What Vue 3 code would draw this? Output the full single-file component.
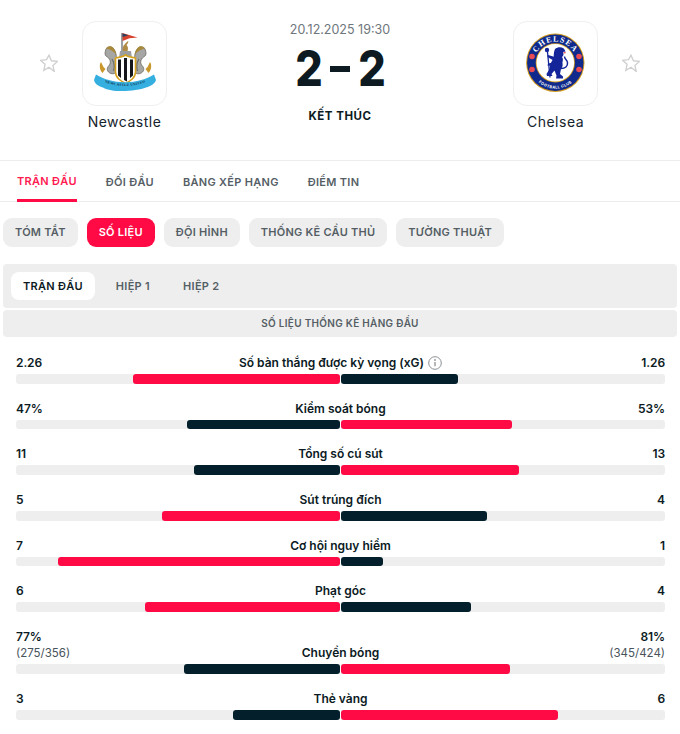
<script setup>
const tabs = ['Trận đấu', 'Đối đầu', 'Bảng xếp hạng', 'Điểm tin']
const pills = ['Tóm tắt', 'Số liệu', 'Đội hình', 'Thống kê cầu thủ', 'Tường thuật']
const periods = ['Trận đấu', 'Hiệp 1', 'Hiệp 2']
const stats = [
  { label: 'Số bàn thắng được kỳ vọng (xG)', l: '2.26', r: '1.26', lw: 207, rw: 117, win: 'l', info: true },
  { label: 'Kiểm soát bóng', l: '47%', r: '53%', lw: 153, rw: 171, win: 'r' },
  { label: 'Tổng số cú sút', l: '11', r: '13', lw: 146, rw: 178, win: 'r' },
  { label: 'Sút trúng đích', l: '5', r: '4', lw: 178, rw: 146, win: 'l' },
  { label: 'Cơ hội nguy hiểm', l: '7', r: '1', lw: 282, rw: 42, win: 'l' },
  { label: 'Phạt góc', l: '6', r: '4', lw: 195, rw: 130, win: 'l' },
  { label: 'Chuyền bóng', l: '77%', r: '81%', ls: '(275/356)', rs: '(345/424)', lw: 156, rw: 169, win: 'r' },
  { label: 'Thẻ vàng', l: '3', r: '6', lw: 107, rw: 217, win: 'r' }
]
const star = 'M9 1.6l2.2 4.9 5.3.6-4 3.6 1.1 5.3L9 12.3l-4.6 2.7 1.1-5.3-4-3.6 5.3-.6z'
</script>

<template>
  <div class="page">
    <header class="match">
      <svg class="star" viewBox="1 1 16 15"><path :d="star" /></svg>
      <div class="team">
        <div class="crest">
          <svg viewBox="0 0 85 85" width="85" height="85">
            <defs>
              <path id="ribbon-arc" d="M18 59c14 8 36 8 50 0" />
              <g id="seahorse">
                <path d="M19 41c-2 3-1.500 8 1.500 11l3-4-2-2c-1-2-1.500-3-2.500-5z" fill="#c9982c" />
                <path d="M24 28c1.500-2.500 5.500-3 7.500-.5 2.500 3 3 7 3 11v13c-3 2-6 1.500-8-.5s-1.500-4.500.5-6.500c2-2.500 1.500-5.500-.5-7.500-1.500-1.500-3.500-2-3.500-4.500 0-1.500.5-3 1-4.500z" fill="#a6a6a4" stroke="#5f5c52" stroke-width=".7" />
                <path d="M24 27.500c1.500-2.500 5.500-3 7.500-.5 1.500 2 2.500 4.500 2.800 7-2-3-5.300-5.500-10.300-6.500z" fill="#a98a3c" />
                <path d="M30 38c2 3 3 7 1.500 12" fill="none" stroke="#6f6f6f" stroke-width="1.300" />
              </g>
            </defs>
            <path d="M40 12v24" stroke="#85898c" stroke-width="1.600" />
            <path d="M40.500 12l15 4.500-8 .8-7 2.700z" fill="#d8432f" />
            <path d="M40.500 12.500l6 1.800-6 1.800z" fill="#27425f" />
            <path d="M41 30c-1-2 0-5 1.500-6.500 1-1.500 2.500-3 4-3.500-.5 2-1 3-2 4 1.500 1.500 2 3.500 1 6z" fill="#b08b45" />
            <path d="M38 30h11l1 7H37z" fill="#9e9e9e" />
            <use href="#seahorse" />
            <use href="#seahorse" transform="translate(87 0) scale(-1 1)" />
            <path d="M33.500 37c3.500-.5 7-1 10-3 3 2 6.500 2.500 10 3v14c0 6-5.500 9-10 11.500-4.500-2.500-10-5.500-10-11.500z" fill="#fff" stroke="#d5a21f" stroke-width="1.600" />
            <path d="M36 38.500h3v18.500l-3-2.500zM42 37h3v23.500l-3-1.500zM48 38.500h3v16l-3 2.500z" fill="#14161a" />
            <path d="M14 53.500c5 3 9 4.500 13 5.500 10 3 22 3 32 0 4-1 8-2.500 13-5.500l2 5.500c-1.500 4-5 6-10 7.500-9 3.500-33 6-43 0-5-1.500-8-3.500-9-7.500z" fill="#35aee0" />
            <text class="ribbon"><textPath href="#ribbon-arc" startOffset="50%" text-anchor="middle">NEWCASTLE UNITED</textPath></text>
          </svg>
        </div>
        <div class="name">Newcastle</div>
      </div>
      <div class="center">
        <div class="date">20.12.2025 19:30</div>
        <div class="score"><span>2</span><i class="dash"></i><span>2</span></div>
        <div class="status">KẾT THÚC</div>
      </div>
      <div class="team">
        <div class="crest">
          <svg viewBox="0 0 85 85" width="85" height="85">
            <defs>
              <path id="top-arc" d="M21 41.800a21 21 0 0 1 42.600 0" />
              <path id="bot-arc" d="M16.500 41.800a25.800 25.800 0 0 0 51.600 0" />
            </defs>
            <circle cx="42.300" cy="41.800" r="29.200" fill="#d49c1e" />
            <circle cx="42.300" cy="41.800" r="28.200" fill="#0f2a8c" />
            <circle cx="42.300" cy="41.800" r="19.600" fill="#d49c1e" />
            <circle cx="42.300" cy="41.800" r="18.800" fill="#fff" />
            <text class="club-top"><textPath href="#top-arc" startOffset="50%" text-anchor="middle">CHELSEA</textPath></text>
            <text class="club-bot"><textPath href="#bot-arc" startOffset="50%" text-anchor="middle">FOOTBALL CLUB</textPath></text>
            <circle cx="19" cy="35.500" r="2.800" fill="#e74a55" />
            <circle cx="66" cy="35.500" r="2.800" fill="#e74a55" />
            <circle cx="19" cy="48.500" r="2.800" fill="#e74a55" />
            <circle cx="66" cy="48.500" r="2.800" fill="#e74a55" />
            <circle cx="34" cy="29" r="2.200" fill="#14259a" />
            <path d="M34.500 31l2.500 25.500" stroke="#14259a" stroke-width="1.300" />
            <path d="M42 28c2-2 6-2.500 8-1 1.500 1 2 2.500 2.500 3.500l-2.500.5c1 2 .5 4-1 5 1.500 2 1 4 0 6l-8-3c-.5-4-.5-8 1-11z" fill="#14259a" />
            <path d="M42 36l7 4c1 3 1 6-1 8l-1 5 3 2.500v2h-7l.5-3-2-5-3 3.500 1 2h-5.500l-.5-2 3-5 1-5c1-3 3-5 4.500-7.500z" fill="#14259a" />
            <path d="M42 36l-7-2-.5 2 6 3.500zM40 41.500l-5 1-.5 2 5 .5z" fill="#14259a" />
            <path d="M48 47.500c4 0 7-2 6.500-6-.5-3-3-3-3-6" fill="none" stroke="#14259a" stroke-width="1.500" />
            <path d="M50 31.500l3-.8-1 2z" fill="#e74a55" />
          </svg>
        </div>
        <div class="name">Chelsea</div>
      </div>
      <svg class="star" viewBox="1 1 16 15"><path :d="star" /></svg>
    </header>

    <nav class="tabs">
      <div v-for="(t, i) in tabs" :key="t" class="tab" :class="{ active: i === 0 }">{{ t }}</div>
    </nav>

    <div class="pills">
      <div v-for="(p, i) in pills" :key="p" class="pill" :class="{ active: i === 1 }">{{ p }}</div>
    </div>

    <div class="periods">
      <div v-for="(p, i) in periods" :key="p" class="period" :class="{ active: i === 0 }">{{ p }}</div>
    </div>
    <div class="section-title">Số liệu thống kê hàng đầu</div>

    <div class="stats">
      <div v-for="s in stats" :key="s.label" class="stat">
        <div class="stat-text">
          <div class="val">{{ s.l }}<div v-if="s.ls" class="sub">{{ s.ls }}</div></div>
          <div class="label">{{ s.label }}
            <svg v-if="s.info" class="info" viewBox="0 0 14 14" width="14" height="14">
              <circle cx="7" cy="7" r="6.300" fill="none" stroke="#8b9196" stroke-width="1" />
              <path d="M7 6v4.200" stroke="#8b9196" stroke-width="1.300" />
              <circle cx="7" cy="4" r=".9" fill="#8b9196" />
            </svg>
          </div>
          <div class="val right">{{ s.r }}<div v-if="s.rs" class="sub">{{ s.rs }}</div></div>
        </div>
        <div class="bars">
          <div class="track left">
            <div class="fill" :class="s.win === 'l' ? 'red' : 'dark'" :style="{ width: s.lw + 'px' }"></div>
          </div>
          <div class="track">
            <div class="fill" :class="s.win === 'r' ? 'red' : 'dark'" :style="{ width: s.rw + 'px' }"></div>
          </div>
        </div>
      </div>
    </div>
  </div>
</template>

<style scoped>
.page {
  width: 680px;
  height: 734px;
  overflow: hidden;
  background: #fff;
  font-family: Inter, "Noto Sans", sans-serif;
  color: #0b1a23;
}
.match {
  display: flex;
  align-items: flex-start;
  gap: 24px;
  height: 139px;
  padding: 21px 40px 0;
  border-bottom: 1px solid #ececec;
}
.star {
  width: 18px;
  height: 18px;
  margin-top: 33px;
  fill: none;
  stroke: #cfcfcf;
  stroke-width: 1.200;
}
.team {
  width: 85px;
  display: flex;
  flex-direction: column;
  align-items: center;
}
.crest {
  width: 85px;
  height: 85px;
  box-sizing: border-box;
  border: 1px solid #efefef;
  border-radius: 14px;
  overflow: hidden;
}
.crest svg {
  display: block;
  margin: -1px;
}
.club-top {
  font: 700 8px "Liberation Serif", serif;
  fill: #fff;
  letter-spacing: 1.100px;
}
.club-bot {
  font: 700 3.800px Inter, sans-serif;
  fill: #fff;
  letter-spacing: 0.400px;
}
.ribbon {
  font: 700 3.600px "Liberation Serif", serif;
  fill: #12384f;
  letter-spacing: 0.200px;
}
.name {
  margin-top: 7px;
  font-size: 14px;
  line-height: 18px;
  letter-spacing: 0.500px;
  color: #15232c;
  white-space: nowrap;
}
.center {
  flex: 1;
  display: flex;
  flex-direction: column;
  align-items: center;
  padding-top: 1px;
}
.date {
  font-size: 12.500px;
  line-height: 16px;
  color: #6e767c;
}
.score {
  display: flex;
  align-items: center;
  gap: 8.500px;
  height: 44px;
  margin-top: 9px;
  font-size: 49px;
  font-weight: 800;
  line-height: 44px;
  color: #0d1a22;
}
.score span {
  display: flex;
  justify-content: center;
  width: 26px;
  transform: scaleX(0.88);
}
.dash {
  width: 20px;
  height: 6px;
  background: #0d1a22;
}
.status {
  margin-top: 17px;
  font-size: 11.500px;
  line-height: 16px;
  font-weight: 700;
  letter-spacing: 0.500px;
  color: #0d1a22;
}
.tabs {
  display: flex;
  gap: 29px;
  height: 40px;
  padding-left: 17px;
  border-bottom: 1px solid #ececec;
}
.tab {
  display: flex;
  align-items: center;
  height: 40px;
  box-sizing: border-box;
  padding-top: 2px;
  font-size: 11px;
  font-weight: 600;
  letter-spacing: 0.300px;
  text-transform: uppercase;
  color: #555e65;
}
.tab.active {
  color: #ff1a50;
  border-bottom: 3px solid #ff0a45;
  padding-top: 2px;
  height: 41px;
}
.pills {
  display: flex;
  gap: 9px;
  padding: 16px 0 0 3px;
}
.pill {
  height: 29px;
  line-height: 29px;
  padding: 0 12px;
  border-radius: 9px;
  background: #eeeeee;
  font-size: 11px;
  font-weight: 600;
  letter-spacing: 0.250px;
  text-transform: uppercase;
  color: #555e65;
}
.pill.active {
  background: #ff0a45;
  color: #fff;
}
.periods {
  display: flex;
  gap: 9px;
  height: 28px;
  margin: 17px 3px 0;
  padding: 8px;
  background: #eeeeee;
  border-radius: 4px;
}
.period {
  height: 28px;
  line-height: 28px;
  padding: 0 12px;
  border-radius: 8px;
  font-size: 11px;
  font-weight: 600;
  letter-spacing: 0.300px;
  text-transform: uppercase;
  color: #555e65;
}
.period.active {
  background: #fff;
  color: #0b1a23;
}
.section-title {
  height: 27px;
  line-height: 27px;
  margin: 2px 3px 0;
  background: #eeeeee;
  border-radius: 4px;
  text-align: center;
  font-size: 10px;
  font-weight: 600;
  letter-spacing: 0.300px;
  text-transform: uppercase;
  color: #555e65;
}
.stats {
  padding: 18px 15px 0 16px;
}
.stat {
  margin-bottom: 17px;
}
.stat-text {
  display: flex;
  align-items: flex-end;
  justify-content: space-between;
  gap: 8px;
  margin-bottom: 3px;
  font-size: 12px;
  line-height: 16px;
  font-weight: 600;
}
.val {
  flex: 1;
  letter-spacing: -0.100px;
}
.val.right {
  text-align: right;
}
.sub {
  font-size: 11.500px;
  letter-spacing: 0;
  font-weight: 400;
  color: #48535b;
}
.label {
  display: flex;
  align-items: center;
  gap: 4px;
  white-space: nowrap;
}
.info {
  flex: none;
}
.bars {
  display: flex;
  gap: 1px;
}
.track {
  flex: 1;
  height: 9.700px;
  display: flex;
  background: #eeeeee;
  border-radius: 0 3px 3px 0;
}
.track.left {
  justify-content: flex-end;
  border-radius: 3px 0 0 3px;
}
.fill {
  height: 100%;
  border-radius: 3px;
}
.red {
  background: #ff0a45;
}
.dark {
  background: #021f2b;
}
</style>
